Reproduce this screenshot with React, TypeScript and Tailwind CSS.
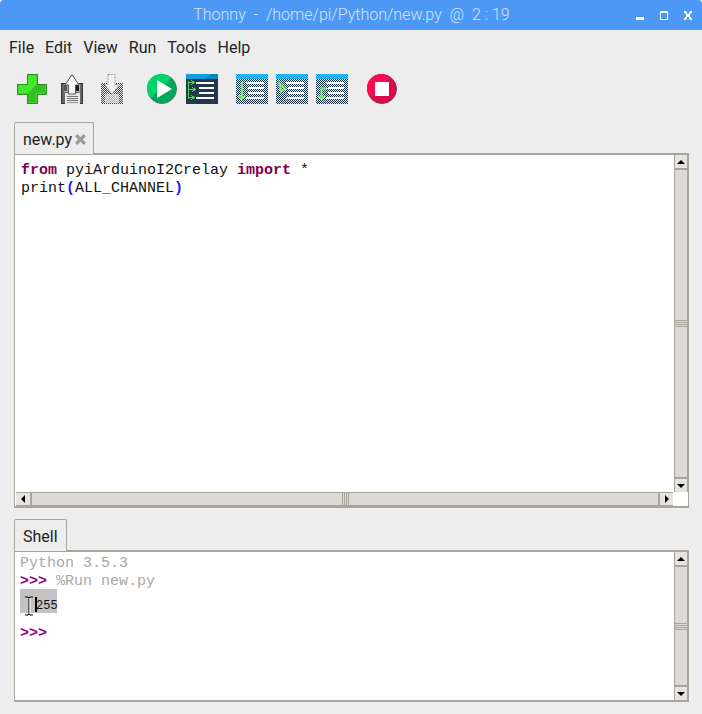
import React from "react";

const UI = "font-['Roboto',sans-serif]";
const MONO = "font-['Liberation_Mono',monospace]";

function Checks({ id }: { id: string }) {
  return (
    <pattern id={id} width="2" height="2" patternUnits="userSpaceOnUse">
      <rect width="2" height="2" fill="#e4e8ec" />
      <rect width="1" height="1" fill="#16304a" />
      <rect x="1" y="1" width="1" height="1" fill="#16304a" />
    </pattern>
  );
}

function Plus() {
  return (
    <svg width="30" height="30" viewBox="0 0 30 30" className="shrink-0" shapeRendering="crispEdges">
      <path d="M10 .5h10v9.500h9.500v10H20v9.500H10V20H.5V10H10z" fill="#3fd62c" stroke="#2f8f25" />
      <path d="M19 2v9h9v8h-9v9h-8v-8L19 11z" fill="#35bf25" shapeRendering="auto" />
      <path d="M11 2h8v9L11 19H2v-8h9z" fill="#43e82d" shapeRendering="auto" />
    </svg>
  );
}

function Save() {
  return (
    <svg width="22" height="30" viewBox="0 0 22 30" className="shrink-0" shapeRendering="crispEdges">
      <rect x="0" y="9" width="22" height="21" fill="#333" />
      <rect x="1" y="10" width="20" height="19" fill="#666" />
      <rect x="3" y="10" width="16" height="8" fill="#b5b5b5" />
      <rect x="15" y="11" width="3" height="6" fill="#1e1e1e" />
      <rect x="3" y="11" width="3" height="6" fill="#555" />
      <rect x="4" y="19" width="15" height="11" fill="#e6e6e6" />
      <rect x="6" y="22" width="11" height="1" fill="#777" />
      <rect x="6" y="24" width="11" height="1" fill="#777" />
      <rect x="6" y="26" width="11" height="1" fill="#777" />
      <rect x="6" y="28" width="11" height="1" fill="#999" />
      <path d="M11 .5 18 11h-3.500v9h-7v-9H4z" fill="#f7f7f7" stroke="#555" shapeRendering="auto" />
    </svg>
  );
}

function SaveDisabled() {
  return (
    <svg width="22" height="30" viewBox="0 0 22 30" className="shrink-0" shapeRendering="crispEdges">
      <defs>
        <pattern id="gr" width="2" height="2" patternUnits="userSpaceOnUse">
          <rect width="2" height="2" fill="#ededed" />
          <rect width="1" height="1" fill="#444" />
          <rect x="1" y="1" width="1" height="1" fill="#444" />
        </pattern>
        <pattern id="gl" width="2" height="2" patternUnits="userSpaceOnUse">
          <rect width="2" height="2" fill="#f4f4f4" />
          <rect width="1" height="1" fill="#aaa" />
          <rect x="1" y="1" width="1" height="1" fill="#aaa" />
        </pattern>
      </defs>
      <rect y="9" width="22" height="21" fill="url(#gr)" />
      <rect x="4" y="20" width="14" height="9" fill="url(#gl)" />
      <path d="M7 .5h7v10h4.500L11 20 3.500 10.500H7z" fill="#f2f2f2" stroke="#999" strokeDasharray="2 1" shapeRendering="auto" />
    </svg>
  );
}

function RunIcon() {
  return (
    <svg width="30" height="30" viewBox="0 0 30 30" className="shrink-0">
      <circle cx="15" cy="15" r="14.500" fill="#00a85c" stroke="#4d7d68" />
      <path d="M4 24A14 14 0 0 1 24 4z" fill="#00d468" />
      <path d="M10 6 25 15 10 24z" fill="#fff" />
    </svg>
  );
}

function DebugIcon() {
  return (
    <svg width="32" height="30" viewBox="0 0 32 30" className="shrink-0" shapeRendering="crispEdges">
      <rect width="32" height="30" rx="1" fill="#24374f" />
      <rect width="32" height="5" fill="#0f9fe0" />
      <path d="M24 0h8v5h-12z" fill="#0b84c4" />
      <g fill="#fff">
        <rect x="10" y="8" width="18" height="2" />
        <rect x="13" y="13" width="15" height="2" />
        <rect x="13" y="18" width="15" height="2" />
        <rect x="10" y="23" width="18" height="2" />
      </g>
      <g fill="none" stroke="#3fe03a" strokeWidth="1">
        <path d="M2.500 7v18M2.500 8.500h5M2.500 15.500h6M2.500 23.500h5" />
        <path d="M5.500 6.500l3 2-3 2M6.500 13.500l3 2-3 2M5.500 21.500l3 2-3 2" />
      </g>
    </svg>
  );
}

function StepIcon({ kind }: { kind: 0 | 1 | 2 }) {
  const id = `chk${kind}`;
  const band = `band${kind}`;
  return (
    <svg width="32" height="30" viewBox="0 0 32 30" className="shrink-0" shapeRendering="crispEdges">
      <defs>
        <Checks id={id} />
        <pattern id={band} width="2" height="2" patternUnits="userSpaceOnUse">
          <rect width="2" height="2" fill="#33d0ff" />
          <rect width="1" height="1" fill="#0a9be0" />
          <rect x="1" y="1" width="1" height="1" fill="#0a9be0" />
        </pattern>
      </defs>
      <rect width="32" height="30" fill={`url(#${id})`} />
      <rect width="32" height="5" fill={`url(#${band})`} />
      <g fill="#fff">
        <rect x="10" y="8" width="18" height="2" />
        <rect x="12" y="13" width="16" height="2" />
        <rect x="12" y="18" width="16" height="2" />
        <rect x="10" y="23" width="18" height="2" />
      </g>
      <g fill="none" stroke="#7dea78" strokeWidth="2" shapeRendering="auto">
        {kind === 0 && <path d="M6 8v17M2.500 21.500 6 25l3.500-3.500" />}
        {kind === 1 && <path d="M3.500 9 9.500 15 5 17.500zM5 11l-1 5" />}
        {kind === 2 && <path d="M11 14.500H5.500V25M2 21.500 5.500 25 9 21.500" />}
      </g>
    </svg>
  );
}

function StopIcon() {
  return (
    <svg width="30" height="30" viewBox="0 0 30 30" className="shrink-0">
      <circle cx="15" cy="15" r="14.500" fill="#dc0a48" stroke="#7b3a50" />
      <path d="M4 24A14 14 0 0 1 24 4z" fill="#ff0a50" />
      <rect x="8" y="8" width="14" height="14" fill="#fff" shapeRendering="crispEdges" />
    </svg>
  );
}

function Arrow({ dir }: { dir: "up" | "down" | "left" | "right" }) {
  const d = {
    up: "M1 7h8L5 3z",
    down: "M1 3h8L5 7z",
    left: "M7 1v8L3 5z",
    right: "M3 1v8l4-4z",
  }[dir];
  return (
    <svg width="10" height="10" viewBox="0 0 10 10">
      <path d={d} fill="#000" />
    </svg>
  );
}

function VScroll() {
  return (
    <div className="flex flex-col w-[14px] shrink-0 bg-[#dcdad5] border-x border-[#a9a59b]">
      <div className="h-[13px] bg-[#e6e4e0] flex items-center justify-center shrink-0">
        <Arrow dir="up" />
      </div>
      <div className="h-[2px] bg-[#a9a59b] shrink-0" />
      <div className="flex-1 flex flex-col items-center justify-center gap-px">
        <div className="w-full h-px bg-[#a9a59b]" />
        <div className="w-full h-px bg-[#a9a59b]" />
        <div className="w-full h-px bg-[#a9a59b]" />
        <div className="w-full h-px bg-[#a9a59b]" />
      </div>
      <div className="h-[2px] bg-[#a9a59b] shrink-0" />
      <div className="h-[13px] bg-[#e6e4e0] flex items-center justify-center shrink-0">
        <Arrow dir="down" />
      </div>
    </div>
  );
}

function HScroll() {
  return (
    <div className="flex h-[14px] shrink-0 bg-[#dcdad5] border-y border-[#a9a59b] mr-[15px] ml-px">
      <div className="w-[14px] bg-[#e6e4e0] flex items-center justify-center shrink-0">
        <Arrow dir="left" />
      </div>
      <div className="w-[2px] bg-[#a9a59b] shrink-0" />
      <div className="flex-1 flex items-center justify-center gap-px">
        <div className="h-full w-px bg-[#a9a59b]" />
        <div className="h-full w-px bg-[#a9a59b]" />
        <div className="h-full w-px bg-[#a9a59b]" />
        <div className="h-full w-px bg-[#a9a59b]" />
      </div>
      <div className="w-[2px] bg-[#a9a59b] shrink-0" />
      <div className="w-[13px] bg-[#e6e4e0] flex items-center justify-center shrink-0">
        <Arrow dir="right" />
      </div>
    </div>
  );
}

function Tab({ children, w }: { children: React.ReactNode; w: string }) {
  return (
    <div className={`${w} h-[32px] ml-[14px] -mb-px relative z-10 bg-[#ededed] border border-b-0 border-[#a9a59b] rounded-t-[2px] flex items-center pl-[8px] pt-[2px] text-[16px] text-[#222] ${UI}`}>
      {children}
    </div>
  );
}

const KW = "text-[#7f0055] font-bold";

export default function App() {
  return (
    <div className={`w-[702px] h-[714px] bg-[#ededed] overflow-hidden flex flex-col ${UI}`}>
      <div className="h-[30px] shrink-0 bg-[#4d98f5] rounded-tl-[4px] rounded-tr-[4px] grid grid-cols-[1fr_auto_1fr] items-center">
        <div />
        <div className="text-[16px] font-light text-[#d3e5fc] whitespace-pre -mt-[1px] ml-[1px]">Thonny  -  /home/pi/Python/new.py  @  2 : 19</div>
        <div className="flex justify-end items-center gap-[16px] pr-[10px]">
          <svg width="8" height="9" viewBox="0 0 8 9" shapeRendering="crispEdges"><rect y="6" width="8" height="3" fill="#fff" /></svg>
          <svg width="8" height="9" viewBox="0 0 8 9" shapeRendering="crispEdges"><path d="M0 0h8v9H0zM1 2v6h6V2z" fill="#fff" fillRule="evenodd" /></svg>
          <svg width="8" height="9" viewBox="0 0 8 9" shapeRendering="crispEdges"><path d="M0 0h2v1h1v2h2V1h1V0h2v2H7v1H6v3h1v1h1v2H6V8H5V6H3v2H2v1H0V7h1V6h1V3H1V2H0z" fill="#fff" /></svg>
        </div>
      </div>

      <div className="h-[34px] shrink-0 flex items-center gap-[11px] pl-[9px] pt-[2px] text-[16px] text-[#222]">
        <span>File</span>
        <span>Edit</span>
        <span>View</span>
        <span>Run</span>
        <span>Tools</span>
        <span>Help</span>
      </div>

      <div className="h-[58px] shrink-0 flex items-start pt-[10px] pl-[17px]">
        <Plus />
        <div className="w-[14px]" />
        <Save />
        <div className="w-[18px]" />
        <SaveDisabled />
        <div className="w-[24px]" />
        <RunIcon />
        <div className="w-[9px]" />
        <DebugIcon />
        <div className="w-[18px]" />
        <StepIcon kind={0} />
        <div className="w-[8px]" />
        <StepIcon kind={1} />
        <div className="w-[8px]" />
        <StepIcon kind={2} />
        <div className="w-[19px]" />
        <StopIcon />
      </div>

      <Tab w="w-[80px]">
        <span>new.py</span>
        <svg width="13" height="13" viewBox="0 0 12 12" className="ml-[2px] mb-[1px]">
          <path d="M2 2l8 8M10 2l-8 8" stroke="#9a9a9a" strokeWidth="3" />
        </svg>
      </Tab>
      <div className="h-[355px] shrink-0 ml-[14px] mr-[13px] border-2 border-l border-r border-[#a9a59b] flex flex-col bg-white">
        <div className="flex-1 flex min-h-0">
          <div className={`flex-1 pl-[6px] pt-[7px] text-[15px] leading-[18px] text-[#111] whitespace-pre ${MONO}`}>
            <div><span className={KW}>from</span> pyiArduinoI2Crelay <span className={KW}>import</span> *</div>
            <div>print<span className="text-[#1a1aff] font-bold">(</span>ALL_CHANNEL<span className="text-[#1a1aff] font-bold">)</span></div>
          </div>
          <VScroll />
        </div>
        <HScroll />
      </div>

      <div className="h-[11px] shrink-0" />
      <Tab w="w-[53px]">Shell</Tab>
      <div className="h-[152px] shrink-0 ml-[14px] mr-[13px] border-2 border-l border-r border-[#a9a59b] flex bg-white">
        <div className={`flex-1 pl-[5px] pt-[3px] text-[15px] leading-[18px] text-[#a8a8a8] whitespace-pre ${MONO}`}>
          <div>Python 3.5.3</div>
          <div><span className="text-[#8b008b] font-bold">&gt;&gt;&gt;</span> %Run new.py</div>
          <div className="relative -mt-[2px] w-[37px] h-[24px] bg-[#c2c2c2] text-[#111] text-[12px] flex items-center pl-[16px] pt-[9px]">
            255
            <div className="absolute left-[15px] top-[8px] w-[2px] h-[15px] bg-black" />
            <svg width="10" height="20" viewBox="0 0 10 20" className="absolute left-[4px] top-[7px]">
              <path d="M1 1h3l1 1 1-1h3M5 2v16M1 19h3l1-1 1 1h3" fill="none" stroke="#000" strokeWidth="1" />
              <path d="M5 2v16" stroke="#fff" strokeWidth="1" transform="translate(1 0)" />
            </svg>
          </div>
          <div className="mt-[12px]"><span className="text-[#8b008b] font-bold">&gt;&gt;&gt;</span></div>
        </div>
        <VScroll />
      </div>
    </div>
  );
}
